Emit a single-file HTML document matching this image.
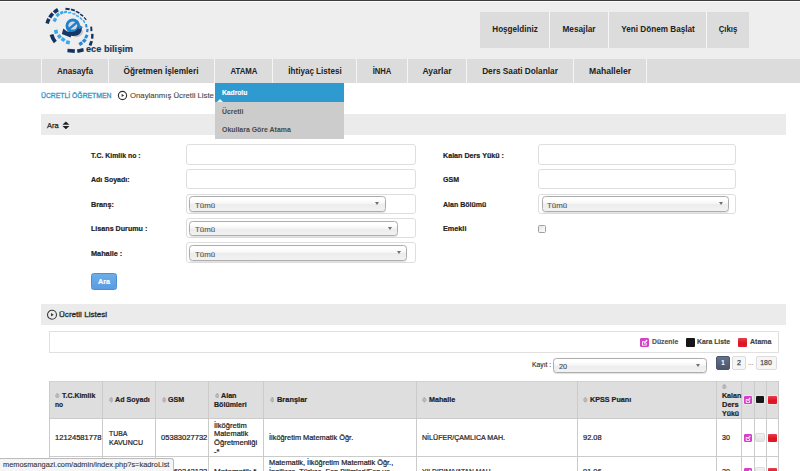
<!DOCTYPE html>
<html lang="tr">
<head>
<meta charset="utf-8">
<title>Ücretli Öğretmen</title>
<style>
*{box-sizing:border-box;margin:0;padding:0}
html,body{width:800px;height:471px;overflow:hidden;background:#fff}
body{font-family:"Liberation Sans",Arial,sans-serif;font-size:8px;color:#222;position:relative}
.abs{position:absolute}
.tx{position:absolute;white-space:nowrap;display:block;line-height:12px}
#topline{left:0;top:0;width:800px;height:2px;background:linear-gradient(#3c3c3c 0,#3c3c3c 50%,#fbfbfb 50%,#fbfbfb 100%)}
#header{left:0;top:1px;width:800px;height:58px;background:#eeeeee}
#nav{left:0;top:59px;width:800px;height:24px;background:#dcdcdc}
.ns{position:absolute;top:59px;width:1px;height:24px;background:#f5f5f5}
.tb{position:absolute;top:12px;height:36px;background:#dcdcdc}
#dd{left:215px;top:83px;width:129px;height:55.5px;background:#cccccc}
#dd .on{position:absolute;left:0;top:0;width:129px;height:19px;background:#2e9ad0}
#dd .tri{position:absolute;left:1.5px;top:16px;width:0;height:0;border-left:3px solid transparent;border-right:3px solid transparent;border-bottom:3.2px solid #fff}
.bar{position:absolute;left:41px;width:745px;height:21px;background:#ebebeb}
.inp{position:absolute;height:20.4px;border:1px solid #dedede;border-radius:3px;background:#fff}
.sel{position:absolute;height:15.4px;border:1px solid #adadad;border-radius:3.5px;box-shadow:0 0.6px 0.8px rgba(0,0,0,0.12);background:linear-gradient(#ffffff 20%,#f4f4f4 50%,#ececec 52%,#f2f2f2 100%)}
.sel:after{content:"";position:absolute;right:5.4px;top:5px;border:2.1px solid transparent;border-top:3px solid #707070;border-bottom:0}
.hl{left:49px;width:729.5px;height:1px;background:#cbcbcb}
.vl{top:381px;width:1px;height:90px;background:#cbcbcb}
.so{position:absolute;width:4.6px;height:5.6px}
.ic{position:absolute;width:8.6px;height:8.6px;border-radius:1px}
.ic.mg{background:#d63fc8}
.ic.bk{background:#151515}
.ic.rd{background:linear-gradient(#e83a4c,#d9101f)}
.ic.gy{background:#e6e6e6;border-radius:2px;box-shadow:0 0 0 0.5px #d8d8d8}
.pg{position:absolute;top:356.3px;height:13.3px;border-radius:2px;background:#f6f6f6;border:1px solid #dcdcdc}
</style>
</head>
<body>
<div class="abs" id="header"></div>
<div class="abs" id="topline"></div>
<svg class="abs" style="left:40px;top:2px" width="60" height="56" viewBox="0 0 505 471">
<path d="M60 180A198 198 0 0 1 75 142" stroke="#14335e" stroke-width="30" fill="none"/>
<path d="M82 130A198 198 0 0 1 108 97" stroke="#14335e" stroke-width="30" fill="none"/>
<path d="M118 88A198 198 0 0 1 151 64" stroke="#14335e" stroke-width="30" fill="none"/>
<rect x="214" y="50" width="36" height="17" fill="#14335e" transform="rotate(8 232 58)"/>
<rect x="260" y="60" width="34" height="15" fill="#14335e" transform="rotate(17 277 68)"/>
<rect x="301" y="79" width="32" height="14" fill="#14335e" transform="rotate(27 317 86)"/>
<rect x="336" y="104" width="30" height="13" fill="#14335e" transform="rotate(38 351 110)"/>
<rect x="366" y="134" width="28" height="11" fill="#14335e" transform="rotate(50 380 140)"/>
<rect x="413" y="218" width="38" height="16" fill="#14335e" transform="rotate(86 432 226)"/>
<rect x="420" y="278" width="40" height="20" fill="#14335e" transform="rotate(93 440 288)"/>
<rect x="408" y="336" width="40" height="24" fill="#14335e" transform="rotate(110 428 348)"/>
<rect x="231" y="396" width="62" height="30" fill="#14335e" transform="rotate(4 262 411)"/>
<rect x="313" y="393" width="54" height="30" fill="#14335e" transform="rotate(-12 340 408)"/>
<path d="M129 337A158 158 0 0 1 97 273" stroke="#14335e" stroke-width="32" fill="none"/>
<rect x="110" y="136" width="30" height="28" fill="#38a8ea" transform="rotate(-62 125 150)"/>
<rect x="135" y="94" width="30" height="27" fill="#38a8ea" transform="rotate(-44 150 108)"/>
<rect x="169" y="78" width="28" height="24" fill="#38a8ea" transform="rotate(-31 183 90)"/>
<rect x="202" y="75" width="26" height="18" fill="#38a8ea" transform="rotate(-19 215 84)"/>
<rect x="237" y="82" width="26" height="13" fill="#38a8ea" transform="rotate(-5 250 88)"/>
<rect x="272" y="94" width="26" height="12" fill="#38a8ea" transform="rotate(11 285 100)"/>
<rect x="302" y="112" width="26" height="12" fill="#38a8ea" transform="rotate(27 315 118)"/>
<rect x="332" y="134" width="26" height="12" fill="#38a8ea" transform="rotate(45 345 140)"/>
<rect x="357" y="158" width="26" height="13" fill="#38a8ea" transform="rotate(62 370 165)"/>
<rect x="376" y="192" width="28" height="17" fill="#2585d6" transform="rotate(80 390 200)"/>
<rect x="384" y="230" width="28" height="19" fill="#2585d6" transform="rotate(98 398 240)"/>
<rect x="375" y="278" width="30" height="24" fill="#2585d6" transform="rotate(118 390 290)"/>
<rect x="358" y="312" width="30" height="27" fill="#2585d6" transform="rotate(133 373 325)"/>
<rect x="328" y="336" width="30" height="28" fill="#2585d6" transform="rotate(148 343 350)"/>
<rect x="119" y="235" width="32" height="30" fill="#38a8ea" transform="rotate(258 135 250)"/>
<rect x="147" y="275" width="32" height="30" fill="#38a8ea" transform="rotate(236 163 290)"/>
<rect x="179" y="301" width="32" height="30" fill="#38a8ea" transform="rotate(215 195 316)"/>
<rect x="219" y="325" width="32" height="30" fill="#38a8ea" transform="rotate(193 235 340)"/>
<ellipse cx="318" cy="262" rx="48" ry="30" fill="#b4b8bf" opacity="0.75" transform="rotate(-25 318 262)"/>
<circle cx="276" cy="200" r="61" fill="#1f80cd"/>
<ellipse cx="276" cy="198" rx="37" ry="34" fill="#d6d9de"/>
<path d="M232 236 L322 162" stroke="#1f80cd" stroke-width="20" fill="none"/>
<path d="M352 214 C356 262 318 294 262 284 L258 298 L184 270 L196 222 L226 246 C262 262 312 250 320 214 Z" fill="#163866"/>
<path d="M322 186 L362 212 L326 232 Z" fill="#1f80cd"/>
</svg>
<div class="tb" style="left:480px;width:69px"></div>
<div class="tb" style="left:549.7px;width:58.3px"></div>
<div class="tb" style="left:608.7px;width:97.3px"></div>
<div class="tb" style="left:706.7px;width:42.5px"></div>
<div class="abs" style="left:549px;top:12px;width:1px;height:36px;background:#f6f6f6"></div>
<div class="abs" style="left:608px;top:12px;width:1px;height:36px;background:#f6f6f6"></div>
<div class="abs" style="left:706px;top:12px;width:1px;height:36px;background:#f6f6f6"></div>
<div class="abs" id="nav"></div>
<div class="ns" style="left:41px"></div>
<div class="ns" style="left:108px"></div>
<div class="ns" style="left:214.3px"></div>
<div class="ns" style="left:272.4px"></div>
<div class="ns" style="left:356.3px"></div>
<div class="ns" style="left:407px"></div>
<div class="ns" style="left:466.3px"></div>
<div class="ns" style="left:573.4px"></div>
<div class="ns" style="left:646px"></div>
<svg class="abs" style="left:117px;top:90px" width="11" height="11" viewBox="0 0 11 11"><circle cx="5.5" cy="5.5" r="4.1" fill="none" stroke="#333" stroke-width="1.15"/><path d="M4.6 3.7 L7.2 5.4 L4.6 7.1 Z" fill="#3a3a3a"/></svg>
<div class="bar" style="top:114px"></div>
<svg class="abs" style="left:61.5px;top:121px" width="8" height="9" viewBox="0 0 8 9"><path d="M0.4 3.7 L3.9 0.5 L7.4 3.7 Z M0.4 5 L7.4 5 L3.9 8.2 Z" fill="#222"/></svg>
<div class="inp" style="left:186px;top:144.3px;width:229.6px"></div>
<div class="inp" style="left:186px;top:169px;width:229.6px"></div>
<div class="inp" style="left:186px;top:193.5px;width:229.6px"></div>
<div class="inp" style="left:186px;top:218px;width:229.6px"></div>
<div class="inp" style="left:186px;top:242.4px;width:229.6px"></div>
<div class="inp" style="left:538px;top:144.3px;width:198px"></div>
<div class="inp" style="left:538px;top:169px;width:198px"></div>
<div class="inp" style="left:538px;top:193.5px;width:198px"></div>
<div class="sel" style="left:189.4px;top:196.2px;width:196.3px"></div>
<div class="sel" style="left:189.4px;top:220.7px;width:208.5px"></div>
<div class="sel" style="left:189.4px;top:245.3px;width:218px"></div>
<div class="sel" style="left:541.6px;top:196.3px;width:187.8px"></div>
<div class="abs" style="left:538px;top:224.5px;width:8px;height:8px;border:1px solid #a0a0a0;background:linear-gradient(135deg,#e4e4e4,#fff);border-radius:1.5px"></div>
<div class="abs" style="left:91.2px;top:272.8px;width:25.5px;height:17px;background:linear-gradient(#6cadea,#5a9ce2);border:1px solid #4d8fd6;border-radius:2.5px"></div>
<div class="bar" style="top:304.2px"></div>
<svg class="abs" style="left:46px;top:309px" width="12" height="12" viewBox="0 0 12 12"><circle cx="6" cy="5.7" r="4.5" fill="none" stroke="#3a3a3a" stroke-width="1.1"/><path d="M5 3.9 L7.7 5.7 L5 7.5 Z" fill="#3a3a3a"/></svg>
<div class="abs" style="left:49px;top:330.6px;width:729.5px;height:22px;border:1px solid #e0e0e0;background:#fff"></div>
<div class="sel" style="left:553.2px;top:358.1px;width:153.6px"></div>
<div class="pg" style="left:715.7px;width:14px;background:linear-gradient(#64728a,#4a566c);border-color:#4a566c"></div>
<div class="pg" style="left:732.4px;width:13.6px"></div>
<div class="pg" style="left:755.5px;width:21.6px"></div>
<div class="abs" style="left:49px;top:381px;width:729.5px;height:37.5px;background:#dedede"></div>
<div class="abs hl" style="top:380.5px;background:#d3d3d3"></div>
<div class="abs hl" style="top:418px"></div>
<div class="abs hl" style="top:456.3px"></div>
<div class="abs vl" style="left:49px"></div>
<div class="abs vl" style="left:102px"></div>
<div class="abs vl" style="left:155px"></div>
<div class="abs vl" style="left:208.25px"></div>
<div class="abs vl" style="left:263.25px"></div>
<div class="abs vl" style="left:415.8px"></div>
<div class="abs vl" style="left:577px"></div>
<div class="abs vl" style="left:715.6px"></div>
<div class="abs vl" style="left:740.9px"></div>
<div class="abs vl" style="left:753.8px"></div>
<div class="abs vl" style="left:766px"></div>
<div class="abs vl" style="left:777.8px"></div>
<svg class="so" style="left:55.3px;top:392.8px" viewBox="0 0 4.6 5.6"><path d="M0.2 2.4 L2.3 0.1 L4.4 2.4 Z M0.2 3.2 L4.4 3.2 L2.3 5.5 Z" fill="#b0b0b0" stroke="#b0b0b0" stroke-width="0.5" stroke-linejoin="round"/></svg>
<svg class="so" style="left:108.6px;top:397.4px" viewBox="0 0 4.6 5.6"><path d="M0.2 2.4 L2.3 0.1 L4.4 2.4 Z M0.2 3.2 L4.4 3.2 L2.3 5.5 Z" fill="#b0b0b0" stroke="#b0b0b0" stroke-width="0.5" stroke-linejoin="round"/></svg>
<svg class="so" style="left:161.6px;top:397.4px" viewBox="0 0 4.6 5.6"><path d="M0.2 2.4 L2.3 0.1 L4.4 2.4 Z M0.2 3.2 L4.4 3.2 L2.3 5.5 Z" fill="#b0b0b0" stroke="#b0b0b0" stroke-width="0.5" stroke-linejoin="round"/></svg>
<svg class="so" style="left:214.8px;top:392.8px" viewBox="0 0 4.6 5.6"><path d="M0.2 2.4 L2.3 0.1 L4.4 2.4 Z M0.2 3.2 L4.4 3.2 L2.3 5.5 Z" fill="#b0b0b0" stroke="#b0b0b0" stroke-width="0.5" stroke-linejoin="round"/></svg>
<svg class="so" style="left:269.8px;top:397.4px" viewBox="0 0 4.6 5.6"><path d="M0.2 2.4 L2.3 0.1 L4.4 2.4 Z M0.2 3.2 L4.4 3.2 L2.3 5.5 Z" fill="#b0b0b0" stroke="#b0b0b0" stroke-width="0.5" stroke-linejoin="round"/></svg>
<svg class="so" style="left:422.0px;top:397.4px" viewBox="0 0 4.6 5.6"><path d="M0.2 2.4 L2.3 0.1 L4.4 2.4 Z M0.2 3.2 L4.4 3.2 L2.3 5.5 Z" fill="#b0b0b0" stroke="#b0b0b0" stroke-width="0.5" stroke-linejoin="round"/></svg>
<svg class="so" style="left:583.3px;top:397.4px" viewBox="0 0 4.6 5.6"><path d="M0.2 2.4 L2.3 0.1 L4.4 2.4 Z M0.2 3.2 L4.4 3.2 L2.3 5.5 Z" fill="#b0b0b0" stroke="#b0b0b0" stroke-width="0.5" stroke-linejoin="round"/></svg>
<svg class="so" style="left:722.1px;top:383.8px" viewBox="0 0 4.6 5.6"><path d="M0.2 2.4 L2.3 0.1 L4.4 2.4 Z M0.2 3.2 L4.4 3.2 L2.3 5.5 Z" fill="#b0b0b0" stroke="#b0b0b0" stroke-width="0.5" stroke-linejoin="round"/></svg>
<svg class="abs" style="left:640.3px;top:337.5px;border-radius:1px;" width="9" height="9" viewBox="0 0 10 10"><rect width="10" height="10" rx="1" fill="#d63fc8"/><path d="M2.2 3.6 H5.2 V4.6 H3.2 V7.4 H6.4 V5.6 H7.4 V8.4 H2.2 Z" fill="#fff"/><path d="M4.2 6.4 L4.6 5 L7.4 1.8 L8.4 2.8 L5.6 6 Z" fill="#fff"/></svg>
<div class="abs" style="left:685.8px;top:337.6px;width:9.1px;height:9.1px;border-radius:1px;background:#171517;"></div>
<div class="abs" style="left:738px;top:337.6px;width:9px;height:9px;border-radius:1px;background:linear-gradient(#e8404f,#dc1424 55%,#e01a2a);"></div>
<svg class="abs" style="left:743.9px;top:395.6px;border-radius:1px;box-shadow:0 0 0 0.8px #ececec;" width="8" height="8" viewBox="0 0 10 10"><rect width="10" height="10" rx="1" fill="#d63fc8"/><path d="M2.2 3.6 H5.2 V4.6 H3.2 V7.4 H6.4 V5.6 H7.4 V8.4 H2.2 Z" fill="#fff"/><path d="M4.2 6.4 L4.6 5 L7.4 1.8 L8.4 2.8 L5.6 6 Z" fill="#fff"/></svg>
<div class="abs" style="left:756.3px;top:395.6px;width:7.8px;height:7.8px;border-radius:1px;background:#171517;box-shadow:0 0 0 0.8px #ececec;"></div>
<div class="abs" style="left:768.4px;top:395.6px;width:8.2px;height:8.2px;border-radius:1px;background:linear-gradient(#e8404f,#dc1424 55%,#e01a2a);box-shadow:0 0 0 0.8px #ececec;"></div>
<svg class="abs" style="left:743.9px;top:433.7px;border-radius:1px;" width="8" height="8" viewBox="0 0 10 10"><rect width="10" height="10" rx="1" fill="#d63fc8"/><path d="M2.2 3.6 H5.2 V4.6 H3.2 V7.4 H6.4 V5.6 H7.4 V8.4 H2.2 Z" fill="#fff"/><path d="M4.2 6.4 L4.6 5 L7.4 1.8 L8.4 2.8 L5.6 6 Z" fill="#fff"/></svg>
<div class="abs" style="left:755.4px;top:432.7px;width:9.5px;height:9.8px;border-radius:2px;background:linear-gradient(#f2f2f2,#e2e2e2);border:0.6px solid #dcdcdc"></div>
<div class="abs" style="left:768.4px;top:433.7px;width:8.3px;height:8.3px;border-radius:1px;background:linear-gradient(#e8404f,#dc1424 55%,#e01a2a);"></div>
<svg class="abs" style="left:743.9px;top:467.6px;border-radius:1px;" width="8" height="8" viewBox="0 0 10 10"><rect width="10" height="10" rx="1" fill="#d63fc8"/><path d="M2.2 3.6 H5.2 V4.6 H3.2 V7.4 H6.4 V5.6 H7.4 V8.4 H2.2 Z" fill="#fff"/><path d="M4.2 6.4 L4.6 5 L7.4 1.8 L8.4 2.8 L5.6 6 Z" fill="#fff"/></svg>
<div class="abs" style="left:755.4px;top:466.6px;width:9.5px;height:9.8px;border-radius:2px;background:linear-gradient(#f2f2f2,#e2e2e2);border:0.6px solid #dcdcdc"></div>
<div class="abs" style="left:768.4px;top:467.6px;width:8.3px;height:8.3px;border-radius:1px;background:linear-gradient(#e8404f,#dc1424 55%,#e01a2a);"></div>
<span class="tx" style="left:514.50px;top:23px;font-size:8.4px;font-weight:bold;color:#222;transform:translateX(-50%) scaleX(0.9660);transform-origin:50% 50%;">Hoşgeldiniz</span>
<span class="tx" style="left:579.10px;top:23px;font-size:8.4px;font-weight:bold;color:#222;transform:translateX(-50%) scaleX(0.9842);transform-origin:50% 50%;">Mesajlar</span>
<span class="tx" style="left:657.50px;top:23px;font-size:8.4px;font-weight:bold;color:#222;transform:translateX(-50%) scaleX(0.9747);transform-origin:50% 50%;">Yeni Dönem Başlat</span>
<span class="tx" style="left:728.00px;top:23px;font-size:8.4px;font-weight:bold;color:#222;transform:translateX(-50%) scaleX(0.9335);transform-origin:50% 50%;">Çıkış</span>
<span class="tx" style="left:74.60px;top:65px;font-size:8.4px;font-weight:bold;color:#222;transform:translateX(-50%) scaleX(0.9664);transform-origin:50% 50%;">Anasayfa</span>
<span class="tx" style="left:161.25px;top:65px;font-size:8.4px;font-weight:bold;color:#222;transform:translateX(-50%) scaleX(0.9885);transform-origin:50% 50%;">Öğretmen İşlemleri</span>
<span class="tx" style="left:243.50px;top:65px;font-size:8.4px;font-weight:bold;color:#222;transform:translateX(-50%) scaleX(0.9310);transform-origin:50% 50%;">ATAMA</span>
<span class="tx" style="left:314.60px;top:65px;font-size:8.4px;font-weight:bold;color:#222;transform:translateX(-50%) scaleX(0.9614);transform-origin:50% 50%;">İhtiyaç Listesi</span>
<span class="tx" style="left:381.90px;top:65px;font-size:8.4px;font-weight:bold;color:#222;transform:translateX(-50%) scaleX(0.9153);transform-origin:50% 50%;">İNHA</span>
<span class="tx" style="left:436.60px;top:65px;font-size:8.4px;font-weight:bold;color:#222;transform:translateX(-50%) scaleX(1.0153);transform-origin:50% 50%;">Ayarlar</span>
<span class="tx" style="left:519.75px;top:65px;font-size:8.4px;font-weight:bold;color:#222;transform:translateX(-50%) scaleX(0.9855);transform-origin:50% 50%;">Ders Saati Dolanlar</span>
<span class="tx" style="left:609.75px;top:65px;font-size:8.4px;font-weight:bold;color:#222;transform:translateX(-50%) scaleX(1.0252);transform-origin:50% 50%;">Mahalleler</span>
<span class="tx" style="left:86.20px;top:43px;font-size:9.8px;font-weight:bold;color:#17365f;transform:scaleX(0.9379);transform-origin:0 50%;-webkit-text-stroke:0.15px #17365f;">ece bilişim</span>
<span class="tx" style="left:41.20px;top:90px;font-size:8.0px;font-weight:normal;color:#2b96cd;transform:scaleX(0.8516);transform-origin:0 50%;-webkit-text-stroke:0.3px #2b96cd;">ÜCRETLİ ÖĞRETMEN</span>
<div class="abs" style="left:0;top:0;width:214.4px;height:110px;overflow:hidden"><span class="tx" style="left:130.00px;top:90px;font-size:7.7px;font-weight:normal;color:#4a4a4a;transform:scaleX(1.0071);transform-origin:0 50%;-webkit-text-stroke:0.12px #4a4a4a;">Onaylanmış Ücretli Listesi</span></div>
<span class="tx" style="left:47.20px;top:120px;font-size:7.8px;font-weight:normal;color:#222;transform:scaleX(0.9555);transform-origin:0 50%;-webkit-text-stroke:0.25px #222;">Ara</span>
<span class="tx" style="left:58.80px;top:309px;font-size:8.0px;font-weight:normal;color:#2a2a2a;transform:scaleX(1.0110);transform-origin:0 50%;-webkit-text-stroke:0.3px #2a2a2a;">Ücretli Listesi</span>
<span class="tx" style="left:90.90px;top:150px;font-size:7.8px;font-weight:bold;color:#222;transform:scaleX(0.8874);transform-origin:0 50%;-webkit-text-stroke:0.2px #222;">T.C. Kimlik no :</span>
<span class="tx" style="left:90.90px;top:174px;font-size:7.8px;font-weight:bold;color:#222;transform:scaleX(0.8976);transform-origin:0 50%;-webkit-text-stroke:0.2px #222;">Adı Soyadı:</span>
<span class="tx" style="left:90.90px;top:199px;font-size:7.8px;font-weight:bold;color:#222;transform:scaleX(0.9270);transform-origin:0 50%;-webkit-text-stroke:0.2px #222;">Branş:</span>
<span class="tx" style="left:90.90px;top:223px;font-size:7.8px;font-weight:bold;color:#222;transform:scaleX(0.9152);transform-origin:0 50%;-webkit-text-stroke:0.2px #222;">Lisans Durumu :</span>
<span class="tx" style="left:90.90px;top:248px;font-size:7.8px;font-weight:bold;color:#222;transform:scaleX(0.9378);transform-origin:0 50%;-webkit-text-stroke:0.2px #222;">Mahalle :</span>
<span class="tx" style="left:443.00px;top:150px;font-size:7.8px;font-weight:bold;color:#222;transform:scaleX(0.9160);transform-origin:0 50%;-webkit-text-stroke:0.2px #222;">Kalan Ders Yükü :</span>
<span class="tx" style="left:443.00px;top:174px;font-size:7.8px;font-weight:bold;color:#222;transform:scaleX(0.9006);transform-origin:0 50%;-webkit-text-stroke:0.2px #222;">GSM</span>
<span class="tx" style="left:443.00px;top:199px;font-size:7.8px;font-weight:bold;color:#222;transform:scaleX(0.9024);transform-origin:0 50%;-webkit-text-stroke:0.2px #222;">Alan Bölümü</span>
<span class="tx" style="left:443.00px;top:223px;font-size:7.8px;font-weight:bold;color:#222;transform:scaleX(0.9308);transform-origin:0 50%;-webkit-text-stroke:0.2px #222;">Emekli</span>
<span class="tx" style="left:195.20px;top:200px;font-size:7.9px;font-weight:normal;color:#585858;transform:scaleX(1.0014);transform-origin:0 50%;-webkit-text-stroke:0.12px #585858;">Tümü</span>
<span class="tx" style="left:195.20px;top:224px;font-size:7.9px;font-weight:normal;color:#585858;transform:scaleX(1.0014);transform-origin:0 50%;-webkit-text-stroke:0.12px #585858;">Tümü</span>
<span class="tx" style="left:195.20px;top:249px;font-size:7.9px;font-weight:normal;color:#585858;transform:scaleX(1.0014);transform-origin:0 50%;-webkit-text-stroke:0.12px #585858;">Tümü</span>
<span class="tx" style="left:547.00px;top:200px;font-size:7.9px;font-weight:normal;color:#585858;transform:scaleX(1.0014);transform-origin:0 50%;-webkit-text-stroke:0.12px #585858;">Tümü</span>
<span class="tx" style="left:104.00px;top:276px;font-size:7.3px;font-weight:bold;color:#fff;transform:translateX(-50%) scaleX(0.9859);transform-origin:50% 50%;-webkit-text-stroke:0.15px #fff;">Ara</span>
<span class="tx" style="left:652.40px;top:336px;font-size:7.0px;font-weight:bold;color:#555;transform:scaleX(0.9760);transform-origin:0 50%;-webkit-text-stroke:0.15px #555;">Düzenle</span>
<span class="tx" style="left:697.40px;top:336px;font-size:7.0px;font-weight:bold;color:#444;transform:scaleX(0.9805);transform-origin:0 50%;-webkit-text-stroke:0.15px #444;">Kara Liste</span>
<span class="tx" style="left:749.60px;top:336px;font-size:7.0px;font-weight:bold;color:#444;transform:scaleX(0.9997);transform-origin:0 50%;-webkit-text-stroke:0.15px #444;">Atama</span>
<span class="tx" style="left:531.80px;top:359px;font-size:7.4px;font-weight:normal;color:#333;transform:scaleX(0.9163);transform-origin:0 50%;-webkit-text-stroke:0.15px #333;">Kayıt :</span>
<span class="tx" style="left:559.00px;top:361px;font-size:7.7px;font-weight:normal;color:#444;transform:scaleX(0.9577);transform-origin:0 50%;-webkit-text-stroke:0.1px #444;">20</span>
<span class="tx" style="left:722.70px;top:357px;font-size:7.0px;font-weight:bold;color:#fff;transform:translateX(-50%) scaleX(0.8704);transform-origin:50% 50%;-webkit-text-stroke:0.1px #fff;">1</span>
<span class="tx" style="left:739.20px;top:357px;font-size:7.0px;font-weight:normal;color:#444;transform:translateX(-50%) scaleX(1.0240);transform-origin:50% 50%;-webkit-text-stroke:0.25px #444;">2</span>
<span class="tx" style="left:747.80px;top:357px;font-size:7.0px;font-weight:normal;color:#555;transform:scaleX(0.9241);transform-origin:0 50%;">...</span>
<span class="tx" style="left:766.30px;top:357px;font-size:7.0px;font-weight:normal;color:#555;transform:translateX(-50%) scaleX(0.9925);transform-origin:50% 50%;-webkit-text-stroke:0.25px #555;">180</span>
<span class="tx" style="left:62.20px;top:390px;font-size:7.8px;font-weight:bold;color:#222;transform:scaleX(0.8936);transform-origin:0 50%;-webkit-text-stroke:0.2px #222;">T.C.Kimlik</span>
<span class="tx" style="left:54.90px;top:399px;font-size:7.8px;font-weight:bold;color:#222;transform:scaleX(0.8498);transform-origin:0 50%;-webkit-text-stroke:0.2px #222;">no</span>
<span class="tx" style="left:115.30px;top:394px;font-size:7.8px;font-weight:bold;color:#222;transform:scaleX(0.9102);transform-origin:0 50%;-webkit-text-stroke:0.2px #222;">Ad Soyadı</span>
<span class="tx" style="left:168.00px;top:394px;font-size:7.8px;font-weight:bold;color:#222;transform:scaleX(0.9119);transform-origin:0 50%;-webkit-text-stroke:0.2px #222;">GSM</span>
<span class="tx" style="left:221.30px;top:390px;font-size:7.8px;font-weight:bold;color:#222;transform:scaleX(0.9168);transform-origin:0 50%;-webkit-text-stroke:0.2px #222;">Alan</span>
<span class="tx" style="left:214.30px;top:399px;font-size:7.8px;font-weight:bold;color:#222;transform:scaleX(0.9091);transform-origin:0 50%;-webkit-text-stroke:0.2px #222;">Bölümleri</span>
<span class="tx" style="left:276.80px;top:394px;font-size:7.8px;font-weight:bold;color:#222;transform:scaleX(0.9545);transform-origin:0 50%;-webkit-text-stroke:0.2px #222;">Branşlar</span>
<span class="tx" style="left:429.30px;top:394px;font-size:7.8px;font-weight:bold;color:#222;transform:scaleX(0.9158);transform-origin:0 50%;-webkit-text-stroke:0.2px #222;">Mahalle</span>
<span class="tx" style="left:589.80px;top:394px;font-size:7.8px;font-weight:bold;color:#222;transform:scaleX(0.9229);transform-origin:0 50%;-webkit-text-stroke:0.2px #222;">KPSS Puanı</span>
<span class="tx" style="left:721.50px;top:390px;font-size:7.8px;font-weight:bold;color:#222;transform:scaleX(0.9089);transform-origin:0 50%;-webkit-text-stroke:0.2px #222;">Kalan</span>
<span class="tx" style="left:721.50px;top:399px;font-size:7.8px;font-weight:bold;color:#222;transform:scaleX(0.9629);transform-origin:0 50%;-webkit-text-stroke:0.2px #222;">Ders</span>
<span class="tx" style="left:721.50px;top:408px;font-size:7.8px;font-weight:bold;color:#222;transform:scaleX(0.8970);transform-origin:0 50%;-webkit-text-stroke:0.2px #222;">Yükü</span>
<span class="tx" style="left:55.40px;top:432px;font-size:7.7px;font-weight:normal;color:#222;transform:scaleX(0.9887);transform-origin:0 50%;-webkit-text-stroke:0.22px #222;">12124581778</span>
<span class="tx" style="left:108.50px;top:428px;font-size:7.7px;font-weight:normal;color:#222;transform:scaleX(0.8920);transform-origin:0 50%;-webkit-text-stroke:0.22px #222;">TUBA</span>
<span class="tx" style="left:108.50px;top:437px;font-size:7.7px;font-weight:normal;color:#222;transform:scaleX(0.9181);transform-origin:0 50%;-webkit-text-stroke:0.22px #222;">KAVUNCU</span>
<span class="tx" style="left:161.30px;top:432px;font-size:7.7px;font-weight:normal;color:#222;transform:scaleX(0.9845);transform-origin:0 50%;-webkit-text-stroke:0.22px #222;">05383027732</span>
<span class="tx" style="left:214.30px;top:420px;font-size:7.7px;font-weight:normal;color:#222;transform:scaleX(0.9812);transform-origin:0 50%;-webkit-text-stroke:0.22px #222;">İlköğretim</span>
<span class="tx" style="left:214.30px;top:428px;font-size:7.7px;font-weight:normal;color:#222;transform:scaleX(0.9642);transform-origin:0 50%;-webkit-text-stroke:0.22px #222;">Matematik</span>
<span class="tx" style="left:214.30px;top:437px;font-size:7.7px;font-weight:normal;color:#222;transform:scaleX(0.9910);transform-origin:0 50%;-webkit-text-stroke:0.22px #222;">Öğretmenliği</span>
<span class="tx" style="left:214.30px;top:446px;font-size:7.7px;font-weight:normal;color:#222;transform:scaleX(0.9888);transform-origin:0 50%;-webkit-text-stroke:0.22px #222;">-*</span>
<span class="tx" style="left:269.40px;top:432px;font-size:7.7px;font-weight:normal;color:#222;transform:scaleX(0.9614);transform-origin:0 50%;-webkit-text-stroke:0.22px #222;">İlköğretim Matematik Öğr.</span>
<span class="tx" style="left:422.00px;top:432px;font-size:7.7px;font-weight:normal;color:#222;transform:scaleX(0.9208);transform-origin:0 50%;-webkit-text-stroke:0.22px #222;">NİLÜFER/ÇAMLICA MAH.</span>
<span class="tx" style="left:583.00px;top:432px;font-size:7.7px;font-weight:normal;color:#222;transform:scaleX(0.9662);transform-origin:0 50%;-webkit-text-stroke:0.22px #222;">92.08</span>
<span class="tx" style="left:721.50px;top:432px;font-size:7.7px;font-weight:normal;color:#222;transform:scaleX(0.9343);transform-origin:0 50%;-webkit-text-stroke:0.22px #222;">30</span>
<span class="tx" style="left:269.40px;top:457px;font-size:7.7px;font-weight:normal;color:#222;transform:scaleX(0.9594);transform-origin:0 50%;-webkit-text-stroke:0.22px #222;">Matematik, İlköğretim Matematik Öğr.,</span>
<span class="tx" style="left:269.40px;top:466px;font-size:7.7px;font-weight:normal;color:#222;transform:scaleX(0.9482);transform-origin:0 50%;-webkit-text-stroke:0.22px #222;">İngilizce, Türkçe, Fen Bilimleri/Fen ve</span>
<span class="tx" style="left:161.30px;top:466px;font-size:7.7px;font-weight:normal;color:#222;transform:scaleX(0.9845);transform-origin:0 50%;-webkit-text-stroke:0.22px #222;">05360342122</span>
<span class="tx" style="left:214.30px;top:466px;font-size:7.7px;font-weight:normal;color:#222;transform:scaleX(1.0470);transform-origin:0 50%;-webkit-text-stroke:0.22px #222;">Matematik *</span>
<span class="tx" style="left:422.00px;top:466px;font-size:7.7px;font-weight:normal;color:#222;transform:scaleX(0.8732);transform-origin:0 50%;-webkit-text-stroke:0.22px #222;">YILDIRIM/VATAN MAH.</span>
<span class="tx" style="left:583.00px;top:466px;font-size:7.7px;font-weight:normal;color:#222;transform:scaleX(0.9662);transform-origin:0 50%;-webkit-text-stroke:0.22px #222;">91.06</span>
<span class="tx" style="left:721.50px;top:466px;font-size:7.7px;font-weight:normal;color:#222;transform:scaleX(0.9343);transform-origin:0 50%;-webkit-text-stroke:0.22px #222;">20</span>
<div class="abs" id="dd"><div class="on"></div><div class="tri"></div></div>
<div class="abs" style="left:0;top:457.5px;width:174px;height:14px;background:#f5f5f5;border:1px solid #bcbcbc;border-left:0;border-bottom:0;border-top-right-radius:3px"></div>
<span class="tx" style="left:221.70px;top:87px;font-size:7.3px;font-weight:bold;color:#fff;transform:scaleX(0.9174);transform-origin:0 50%;-webkit-text-stroke:0.15px #fff;">Kadrolu</span>
<span class="tx" style="left:221.70px;top:106px;font-size:7.3px;font-weight:bold;color:#484848;transform:scaleX(0.9376);transform-origin:0 50%;">Ücretli</span>
<span class="tx" style="left:221.70px;top:124px;font-size:7.3px;font-weight:bold;color:#484848;transform:scaleX(0.9512);transform-origin:0 50%;">Okullara Göre Atama</span>
<span class="tx" style="left:2.80px;top:459px;font-size:7.3px;font-weight:normal;color:#333;transform:scaleX(1.0117);transform-origin:0 50%;-webkit-text-stroke:0.1px #333;">memosmangazi.com/admin/index.php?s=kadroList</span>
</body>
</html>
